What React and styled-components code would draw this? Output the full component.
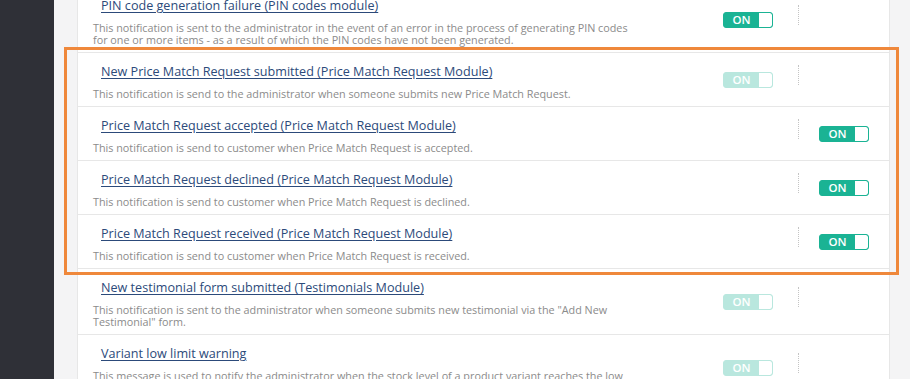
import React from 'react';
import styled, { createGlobalStyle, css } from 'styled-components';

const GlobalStyle = createGlobalStyle`
  html, body {
    margin: 0;
    padding: 0;
    background: #f4f4f5;
    font-family: 'Open Sans', 'Noto Sans', sans-serif;
  }
`;

const Layout = styled.div`
  display: flex;
  height: 379px;
  overflow: hidden;
`;

const Sidebar = styled.aside`
  width: 54px;
  flex-shrink: 0;
  background: #2f3037;
`;

const Main = styled.main`
  flex: 1;
  padding: 0 20px 0 23px;
`;

const Card = styled.div`
  margin-top: -13px;
  background: #fff;
  border-left: 1px solid #e7e7e7;
  border-right: 1px solid #e7e7e7;
`;

const Highlight = styled.div`
  position: relative;

  &::after {
    content: '';
    position: absolute;
    top: -6px;
    bottom: -6px;
    left: -14px;
    right: -10px;
    border: 3px solid #ef883b;
    pointer-events: none;
  }
`;

const Row = styled.div`
  display: flex;
  align-items: center;
  padding: 9px 0 6px 15px;
  border-bottom: 1px solid #e7e7e7;
`;

const Info = styled.div`
  flex: 1;
  min-width: 0;
`;

const Title = styled.a`
  display: block;
  width: fit-content;
  margin: 0 0 6px 8px;
  font-size: 12.6px;
  line-height: 20px;
  color: #2c4a7a;
  text-decoration: underline;
  text-underline-offset: 2px;
  cursor: pointer;
`;

const Desc = styled.p`
  margin: 0;
  max-width: 545px;
  font-size: 10.8px;
  line-height: 12px;
  color: #8b8b8b;
`;

const Controls = styled.div`
  display: flex;
  align-items: center;
  padding-right: 20px;
  margin-bottom: 3px;
`;

const Slot = styled.div`
  width: 50px;
  height: 16px;
`;

const Dots = styled.div`
  width: 0;
  height: 20px;
  margin: 0 20px 10px 25px;
  border-left: 1px dotted #c4c4c4;
`;

const Toggle = styled.div`
  display: flex;
  width: 50px;
  height: 16px;
  box-sizing: border-box;
  border: 1px solid #1ab394;
  border-radius: 3px;
  background: #1ab394;
  overflow: hidden;
  ${(p) =>
    p.$faded &&
    css`
      opacity: 0.3;
    `}
`;

const ToggleLabel = styled.span`
  flex: 1;
  display: flex;
  align-items: center;
  justify-content: center;
  font-size: 11.5px;
  font-weight: 600;
  color: #fff;
  line-height: 1;
`;

const Knob = styled.span`
  width: 13px;
  background: #fff;
  border-radius: 0 2px 2px 0;
`;

const Switch = ({ faded }) => (
  <Toggle $faded={faded}>
    <ToggleLabel>ON</ToggleLabel>
    <Knob />
  </Toggle>
);

const NotificationRow = ({ title, desc, faded, right }) => (
  <Row>
    <Info>
      <Title>{title}</Title>
      <Desc>{desc}</Desc>
    </Info>
    <Controls>
      <Slot>{!right && <Switch faded={faded} />}</Slot>
      <Dots />
      <Slot>{right && <Switch faded={faded} />}</Slot>
    </Controls>
  </Row>
);

const before = [
  {
    title: 'PIN code generation failure (PIN codes module)',
    desc: 'This notification is sent to the administrator in the event of an error in the process of generating PIN codes for one or more items - as a result of which the PIN codes have not been generated.',
  },
];

const highlighted = [
  {
    title: 'New Price Match Request submitted (Price Match Request Module)',
    desc: 'This notification is send to the administrator when someone submits new Price Match Request.',
    faded: true,
  },
  {
    title: 'Price Match Request accepted (Price Match Request Module)',
    desc: 'This notification is send to customer when Price Match Request is accepted.',
    right: true,
  },
  {
    title: 'Price Match Request declined (Price Match Request Module)',
    desc: 'This notification is send to customer when Price Match Request is declined.',
    right: true,
  },
  {
    title: 'Price Match Request received (Price Match Request Module)',
    desc: 'This notification is send to customer when Price Match Request is received.',
    right: true,
  },
];

const after = [
  {
    title: 'New testimonial form submitted (Testimonials Module)',
    desc: 'This notification is sent to the administrator when someone submits new testimonial via the "Add New Testimonial" form.',
    faded: true,
  },
  {
    title: 'Variant low limit warning',
    desc: 'This message is used to notify the administrator when the stock level of a product variant reaches the low limit value set for it.',
    faded: true,
  },
];

export default function App() {
  return (
    <>
      <GlobalStyle />
      <Layout>
        <Sidebar />
        <Main>
          <Card>
            {before.map((n) => (
              <NotificationRow key={n.title} {...n} />
            ))}
            <Highlight>
              {highlighted.map((n) => (
                <NotificationRow key={n.title} {...n} />
              ))}
            </Highlight>
            {after.map((n) => (
              <NotificationRow key={n.title} {...n} />
            ))}
          </Card>
        </Main>
      </Layout>
    </>
  );
}
